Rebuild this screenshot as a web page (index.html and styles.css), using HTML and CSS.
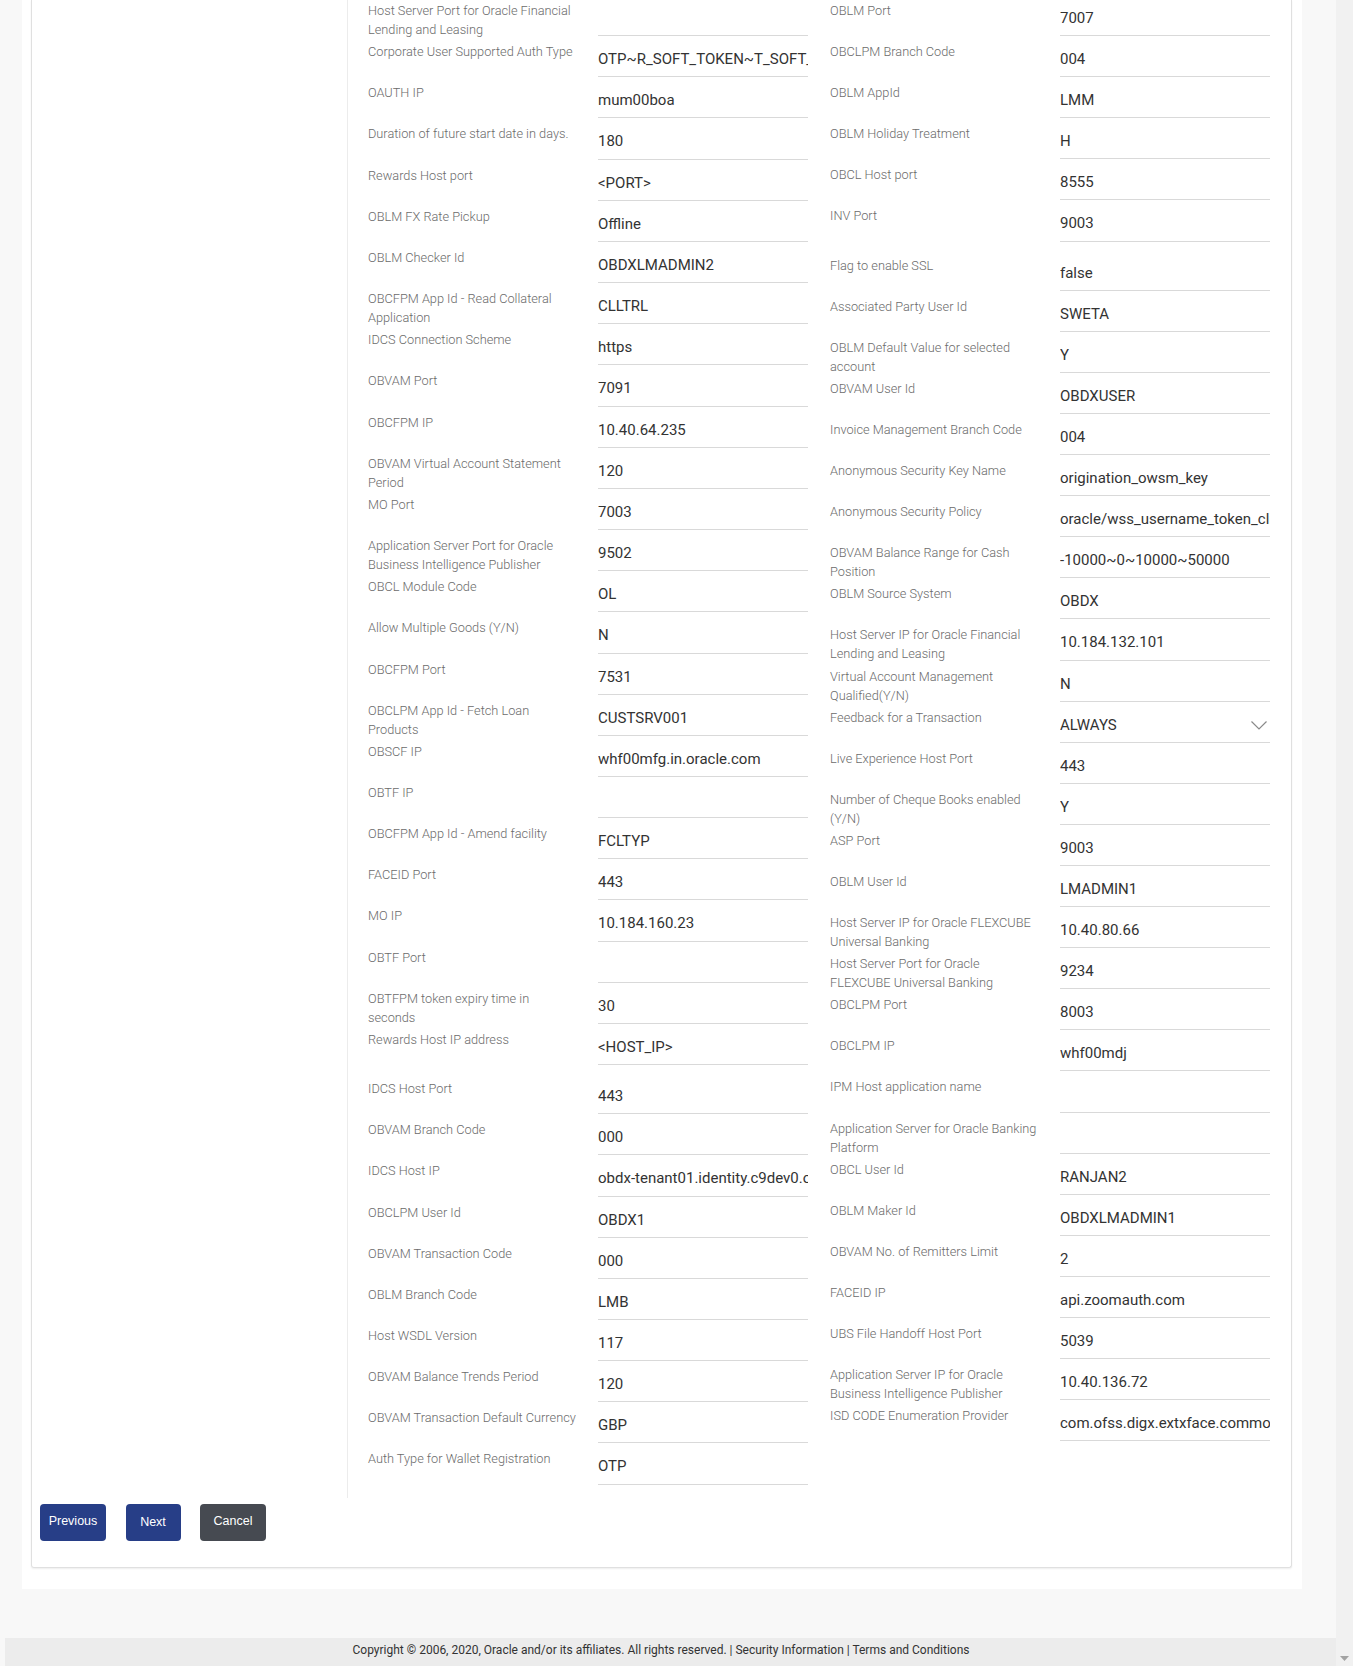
FILE: index.html
```html
<!DOCTYPE html>
<html lang="en">
<head>
<meta charset="utf-8">
<title>System Configuration</title>
<link rel="stylesheet" href="styles.css">
</head>
<body>
<div class="viewport">
  <div class="panel">
    <div class="card">
      <div class="card-body">
        <div class="card-side"></div>
        <div class="card-main">
          <div class="fields">
            <div class="col col-left">
              <div class="field"><div class="field-label">Host Server Port for Oracle Financial<br>Lending and Leasing</div><div class="field-input"></div></div>
              <div class="field"><div class="field-label">Corporate User Supported Auth Type</div><div class="field-input">OTP~R_SOFT_TOKEN~T_SOFT_TOKEN</div></div>
              <div class="field"><div class="field-label">OAUTH IP</div><div class="field-input">mum00boa</div></div>
              <div class="field"><div class="field-label">Duration of future start date in days.</div><div class="field-input">180</div></div>
              <div class="field"><div class="field-label">Rewards Host port</div><div class="field-input">&lt;PORT&gt;</div></div>
              <div class="field"><div class="field-label">OBLM FX Rate Pickup</div><div class="field-input">Offline</div></div>
              <div class="field"><div class="field-label">OBLM Checker Id</div><div class="field-input">OBDXLMADMIN2</div></div>
              <div class="field"><div class="field-label">OBCFPM App Id - Read Collateral<br>Application</div><div class="field-input">CLLTRL</div></div>
              <div class="field"><div class="field-label">IDCS Connection Scheme</div><div class="field-input">https</div></div>
              <div class="field"><div class="field-label">OBVAM Port</div><div class="field-input">7091</div></div>
              <div class="field"><div class="field-label">OBCFPM IP</div><div class="field-input">10.40.64.235</div></div>
              <div class="field"><div class="field-label">OBVAM Virtual Account Statement<br>Period</div><div class="field-input">120</div></div>
              <div class="field"><div class="field-label">MO Port</div><div class="field-input">7003</div></div>
              <div class="field"><div class="field-label">Application Server Port for Oracle<br>Business Intelligence Publisher</div><div class="field-input">9502</div></div>
              <div class="field"><div class="field-label">OBCL Module Code</div><div class="field-input">OL</div></div>
              <div class="field"><div class="field-label">Allow Multiple Goods (Y/N)</div><div class="field-input">N</div></div>
              <div class="field"><div class="field-label">OBCFPM Port</div><div class="field-input">7531</div></div>
              <div class="field"><div class="field-label">OBCLPM App Id - Fetch Loan<br>Products</div><div class="field-input">CUSTSRV001</div></div>
              <div class="field"><div class="field-label">OBSCF IP</div><div class="field-input">whf00mfg.in.oracle.com</div></div>
              <div class="field"><div class="field-label">OBTF IP</div><div class="field-input"></div></div>
              <div class="field"><div class="field-label">OBCFPM App Id - Amend facility</div><div class="field-input">FCLTYP</div></div>
              <div class="field"><div class="field-label">FACEID Port</div><div class="field-input">443</div></div>
              <div class="field"><div class="field-label">MO IP</div><div class="field-input">10.184.160.23</div></div>
              <div class="field"><div class="field-label">OBTF Port</div><div class="field-input"></div></div>
              <div class="field"><div class="field-label">OBTFPM token expiry time in<br>seconds</div><div class="field-input">30</div></div>
              <div class="field"><div class="field-label">Rewards Host IP address</div><div class="field-input">&lt;HOST_IP&gt;</div></div>
              <div class="field tall"><div class="field-label">IDCS Host Port</div><div class="field-input">443</div></div>
              <div class="field"><div class="field-label">OBVAM Branch Code</div><div class="field-input">000</div></div>
              <div class="field"><div class="field-label">IDCS Host IP</div><div class="field-input">obdx-tenant01.identity.c9dev0.oc9qadev.oraclevcn.com</div></div>
              <div class="field"><div class="field-label">OBCLPM User Id</div><div class="field-input">OBDX1</div></div>
              <div class="field"><div class="field-label">OBVAM Transaction Code</div><div class="field-input">000</div></div>
              <div class="field"><div class="field-label">OBLM Branch Code</div><div class="field-input">LMB</div></div>
              <div class="field"><div class="field-label">Host WSDL Version</div><div class="field-input">117</div></div>
              <div class="field"><div class="field-label">OBVAM Balance Trends Period</div><div class="field-input">120</div></div>
              <div class="field"><div class="field-label">OBVAM Transaction Default Currency</div><div class="field-input">GBP</div></div>
              <div class="field"><div class="field-label">Auth Type for Wallet Registration</div><div class="field-input">OTP</div></div>
            </div>
            <div class="col col-right">
              <div class="field"><div class="field-label">OBLM Port</div><div class="field-input">7007</div></div>
              <div class="field"><div class="field-label">OBCLPM Branch Code</div><div class="field-input">004</div></div>
              <div class="field"><div class="field-label">OBLM AppId</div><div class="field-input">LMM</div></div>
              <div class="field"><div class="field-label">OBLM Holiday Treatment</div><div class="field-input">H</div></div>
              <div class="field"><div class="field-label">OBCL Host port</div><div class="field-input">8555</div></div>
              <div class="field"><div class="field-label">INV Port</div><div class="field-input">9003</div></div>
              <div class="field tall"><div class="field-label">Flag to enable SSL</div><div class="field-input">false</div></div>
              <div class="field"><div class="field-label">Associated Party User Id</div><div class="field-input">SWETA</div></div>
              <div class="field"><div class="field-label">OBLM Default Value for selected<br>account</div><div class="field-input">Y</div></div>
              <div class="field"><div class="field-label">OBVAM User Id</div><div class="field-input">OBDXUSER</div></div>
              <div class="field"><div class="field-label">Invoice Management Branch Code</div><div class="field-input">004</div></div>
              <div class="field"><div class="field-label">Anonymous Security Key Name</div><div class="field-input">origination_owsm_key</div></div>
              <div class="field"><div class="field-label">Anonymous Security Policy</div><div class="field-input">oracle/wss_username_token_client_policy</div></div>
              <div class="field"><div class="field-label">OBVAM Balance Range for Cash<br>Position</div><div class="field-input">-10000~0~10000~50000</div></div>
              <div class="field"><div class="field-label">OBLM Source System</div><div class="field-input">OBDX</div></div>
              <div class="field"><div class="field-label">Host Server IP for Oracle Financial<br>Lending and Leasing</div><div class="field-input">10.184.132.101</div></div>
              <div class="field"><div class="field-label">Virtual Account Management<br>Qualified(Y/N)</div><div class="field-input">N</div></div>
              <div class="field"><div class="field-label">Feedback for a Transaction</div><div class="field-input select"><span>ALWAYS</span><svg class="chevron" width="16" height="9" viewBox="0 0 16 9"><polyline points="0.5,0.5 8,8 15.5,0.5" fill="none" stroke="#8a8a8a" stroke-width="1.2"/></svg></div></div>
              <div class="field"><div class="field-label">Live Experience Host Port</div><div class="field-input">443</div></div>
              <div class="field"><div class="field-label">Number of Cheque Books enabled<br>(Y/N)</div><div class="field-input">Y</div></div>
              <div class="field"><div class="field-label">ASP Port</div><div class="field-input">9003</div></div>
              <div class="field"><div class="field-label">OBLM User Id</div><div class="field-input">LMADMIN1</div></div>
              <div class="field"><div class="field-label">Host Server IP for Oracle FLEXCUBE<br>Universal Banking</div><div class="field-input">10.40.80.66</div></div>
              <div class="field"><div class="field-label">Host Server Port for Oracle<br>FLEXCUBE Universal Banking</div><div class="field-input">9234</div></div>
              <div class="field"><div class="field-label">OBCLPM Port</div><div class="field-input">8003</div></div>
              <div class="field"><div class="field-label">OBCLPM IP</div><div class="field-input">whf00mdj</div></div>
              <div class="field"><div class="field-label">IPM Host application name</div><div class="field-input"></div></div>
              <div class="field"><div class="field-label">Application Server for Oracle Banking<br>Platform</div><div class="field-input"></div></div>
              <div class="field"><div class="field-label">OBCL User Id</div><div class="field-input">RANJAN2</div></div>
              <div class="field"><div class="field-label">OBLM Maker Id</div><div class="field-input">OBDXLMADMIN1</div></div>
              <div class="field"><div class="field-label">OBVAM No. of Remitters Limit</div><div class="field-input">2</div></div>
              <div class="field"><div class="field-label">FACEID IP</div><div class="field-input">api.zoomauth.com</div></div>
              <div class="field"><div class="field-label">UBS File Handoff Host Port</div><div class="field-input">5039</div></div>
              <div class="field"><div class="field-label">Application Server IP for Oracle<br>Business Intelligence Publisher</div><div class="field-input">10.40.136.72</div></div>
              <div class="field"><div class="field-label">ISD CODE Enumeration Provider</div><div class="field-input">com.ofss.digx.extxface.commons.enumeration</div></div>
            </div>
          </div>
        </div>
      </div>
      <div class="actions">
        <button class="btn btn-primary btn-prev" type="button">Previous</button>
        <button class="btn btn-primary btn-next" type="button">Next</button>
        <button class="btn btn-secondary btn-cancel" type="button">Cancel</button>
      </div>
    </div>
  </div>
  <div class="footer">Copyright © 2006, 2020, Oracle and/or its affiliates. All rights reserved. | Security Information | Terms and Conditions</div>
</div>
<div class="scrollbar">
  <svg class="scroll-arrow" width="9" height="5" viewBox="0 0 9 5"><polygon points="0,0 9,0 4.5,5" fill="#a3a3a3"/></svg>
</div>
</body>
</html>
```
FILE: styles.css
```css
html, body {
  margin: 0;
  padding: 0;
}

body {
  background: #f8f8f8;
  font-family: Roboto, "Liberation Sans", Arial, sans-serif;
  display: flex;
  height: 1666px;
  overflow: hidden;
}

.viewport {
  flex: 0 0 1336px;
  width: 1336px;
}

.scrollbar {
  flex: 0 0 17px;
  background: #f1f1f1;
  display: flex;
  flex-direction: column;
  justify-content: flex-end;
  align-items: center;
}

.scroll-arrow {
  margin-bottom: 5px;
}

.panel {
  margin-left: 22px;
  width: 1280px;
  box-sizing: border-box;
  background: #ffffff;
  padding: 0 10px 21px 9px;
}

.card {
  border: 1px solid #e0e0e0;
  border-top: 0;
  border-radius: 0 0 3px 3px;
  box-shadow: 0 1px 2px rgba(0, 0, 0, 0.07);
  padding-bottom: 26px;
}

.card-body {
  display: flex;
}

.card-side {
  flex: 0 0 315px;
}

.card-main {
  flex: 1;
  border-left: 1px solid #ececec;
  padding: 0 21px 13px 20px;
}

.fields {
  display: grid;
  grid-template-columns: 440px 440px;
  column-gap: 22px;
  align-items: start;
  margin-top: -5px;
}

.col {
  display: flex;
  flex-direction: column;
}

.field {
  display: flex;
  height: 41.1px;
}

.col-left .field {
  height: 41.17px;
}

.field.tall {
  margin-top: 8px;
}

.field-label {
  flex: 0 0 230px;
  padding-top: 6px;
  font-size: 12.75px;
  line-height: 19px;
  font-weight: 300;
  color: #6b6b6b;
  white-space: nowrap;
}

.field-input {
  flex: 0 0 210px;
  box-sizing: border-box;
  height: 100%;
  border-bottom: 1px solid #d9d9d9;
  padding-top: 12px;
  font-size: 15px;
  line-height: 22px;
  color: #333333;
  white-space: nowrap;
  overflow: hidden;
}

.field-input.select {
  display: flex;
  justify-content: space-between;
  align-items: flex-start;
}

.chevron {
  margin-top: 7px;
  margin-right: 3px;
}

.actions {
  display: flex;
  gap: 19.5px;
  padding: 6px 0 0 8px;
}

.btn {
  height: 37px;
  border: 0;
  border-radius: 4px;
  color: #ffffff;
  font-family: "Liberation Sans", Arial, sans-serif;
  font-size: 12.5px;
  padding: 0 0 3px 0;
  cursor: pointer;
}

.btn-primary {
  background: #273e87;
}

.btn-secondary {
  background: #464a51;
}

.btn-prev {
  width: 66px;
}

.btn-next {
  width: 55px;
  padding-bottom: 0;
}

.btn-cancel {
  width: 66px;
}

.footer {
  margin: 49px 0 0 5px;
  height: 40px;
  background: #ececec;
  padding-right: 19px;
  font-size: 12px;
  line-height: 25px;
  color: #333333;
  text-align: center;
}
```
